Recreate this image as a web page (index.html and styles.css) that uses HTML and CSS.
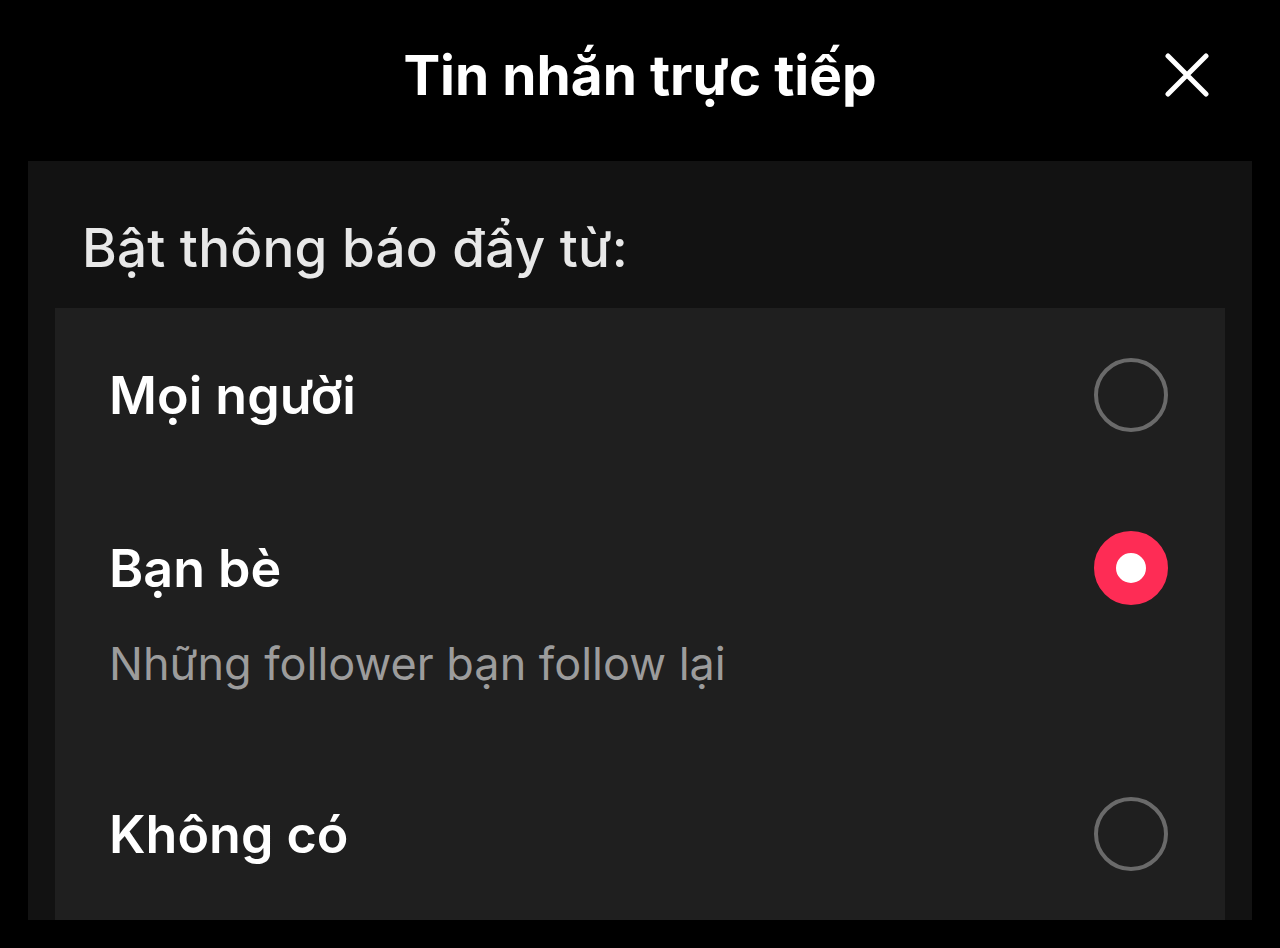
FILE: index.html
```html
<!DOCTYPE html>
<html lang="vi">
<head>
<meta charset="utf-8">
<link rel="stylesheet" href="styles.css">
</head>
<body>
<div class="screen">
  <header class="topbar">
    <h1 class="title">Tin nhắn trực tiếp</h1>
    <button class="close" aria-label="Đóng">
      <svg width="44" height="44" viewBox="0 0 44 44"><path d="M3 3 L41 41 M41 3 L3 41" stroke="#fff" stroke-width="5" stroke-linecap="round"/></svg>
    </button>
  </header>
  <section class="panel">
    <h2 class="heading">Bật thông báo đẩy từ:</h2>
    <div class="card">
      <div class="option">
        <div class="opt-row">
          <span class="label">Mọi người</span>
          <span class="radio"></span>
        </div>
      </div>
      <div class="option">
        <div class="opt-row">
          <span class="label">Bạn bè</span>
          <span class="radio checked"></span>
        </div>
        <div class="desc">Những follower bạn follow lại</div>
      </div>
      <div class="option">
        <div class="opt-row">
          <span class="label">Không có</span>
          <span class="radio"></span>
        </div>
      </div>
    </div>
  </section>
</div>
</body>
</html>
```
FILE: styles.css
```css
* { box-sizing: border-box; margin: 0; padding: 0; }
html, body { background: #000; }
body { width: 1280px; height: 948px; overflow: hidden; font-family: Inter, "Noto Sans", sans-serif; color: #fff; }
.screen { display: flex; flex-direction: column; height: 948px; }
.topbar { position: relative; height: 161px; display: flex; align-items: center; justify-content: center; }
.title { font-size: 55px; font-weight: 700; letter-spacing: 0; margin-top: -12px; }
.close { position: absolute; right: 71px; top: 53px; background: none; border: 0; width: 44px; height: 44px; display: flex; }
.panel { margin: 0 28px; background: #121212; height: 759px; display: flex; flex-direction: column; }
.heading { font-size: 53px; font-weight: 500; color: #e8e8e8; padding: 56px 0 0 54px; height: 147px; line-height: 1.2; letter-spacing: 0.2px; }
.card { margin: 0 27px; background: #1f1f1f; flex: 1; padding: 0 0 0 54px; }
.option { padding-right: 57px; }
.opt-row { display: flex; align-items: center; justify-content: space-between; }
.option:nth-child(1) .opt-row { height: 174px; }
.option:nth-child(2) .opt-row { height: 172px; }
.option:nth-child(3) { padding-top: 93px; }
.option:nth-child(3) .opt-row { height: 100px; }
.label { font-size: 52px; font-weight: 600; }
.desc { font-size: 45px; color: #9c9c9c; margin-top: -17px; line-height: 1.2; }
.radio { width: 74px; height: 74px; border-radius: 50%; border: 4px solid #6a6a6a; flex: none; }
.radio.checked { border: 22px solid #fe2c55; background: #fff; }
```
